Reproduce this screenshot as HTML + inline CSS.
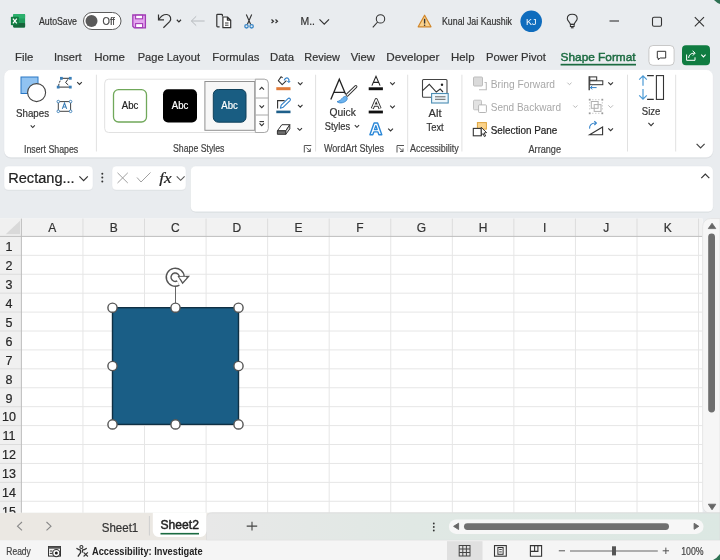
<!DOCTYPE html><html><head><meta charset="utf-8"><style>html,body{margin:0;padding:0;width:720px;height:560px;overflow:hidden;background:#e9ecef}svg{display:block}</style></head><body>
<svg width="720" height="560" viewBox="0 0 720 560" style="will-change:transform">
<rect x="0" y="0" width="720" height="560" fill="#e9ecef"/>
<rect x="13.2" y="14" width="11.9" height="13.5" rx="1" fill="#1f9d5c"/>
<rect x="13.2" y="14" width="11.9" height="4.6" rx="1" fill="#2bb06c"/>
<rect x="13.2" y="23" width="11.9" height="4.5" rx="1" fill="#17653b"/>
<rect x="10.9" y="16.8" width="7.9" height="8.4" rx="0.8" fill="#107c41"/>
<path d="M12.9 18.7 L16.8 23.3 M16.8 18.7 L12.9 23.3" stroke="#fff" stroke-width="1.3"/>
<text x="39" y="25" font-size="10.5" fill="#333" font-weight="400" text-anchor="start" textLength="38" lengthAdjust="spacingAndGlyphs" style='font-family:"Liberation Sans", sans-serif;' stroke="#333" stroke-width="0.2">AutoSave</text>
<rect x="83.5" y="12.5" width="37.5" height="17" rx="8.5" fill="#fff" stroke="#5c5c5c" stroke-width="1"/>
<circle cx="91.5" cy="21.1" r="6" fill="#5a5a5a"/>
<text x="102.5" y="25" font-size="10" fill="#444" font-weight="400" text-anchor="start" textLength="12.5" lengthAdjust="spacingAndGlyphs" style='font-family:"Liberation Sans", sans-serif;' stroke="#444" stroke-width="0.2">Off</text>
<path d="M132.8 15 H145.4 V27.8 H134.3 L132.8 26.3 Z" fill="#e5a6f0" stroke="#a23cb6" stroke-width="1.3"/>
<rect x="135.6" y="15.2" width="7" height="3.6" fill="#fff" stroke="#a23cb6" stroke-width="1.1"/>
<rect x="135.6" y="23.6" width="7" height="4" fill="#fff" stroke="#a23cb6" stroke-width="1.1"/>
<path d="M158.5 14.4 V19.9 H164" fill="none" stroke="#333" stroke-width="1.2"/>
<path d="M158.9 19.5 C161 15.8 164.3 14.3 167 14.5 C170.6 14.9 171.8 19 169.6 21.6 L163.4 27.7" fill="none" stroke="#333" stroke-width="1.2"/>
<path d="M176.8 19.750000000000004 L178.9 21.849999999999998 L181 19.750000000000004" fill="none" stroke="#333" stroke-width="1.2"/>
<path d="M191.4 21 H204.6 M191.4 21 L196.2 16.3 M191.4 21 L196.2 25.6" fill="none" stroke="#b6babe" stroke-width="1"/>
<path d="M219.6 26.8 H217.6 C217.1 26.8 216.8 26.5 216.8 26 V15.1 C216.8 14.6 217.1 14.3 217.6 14.3 H221.6 C222.1 14.3 222.4 14.6 222.4 15.1 V16.6" fill="none" stroke="#333" stroke-width="1.2"/>
<path d="M222.9 17 H227.4 L230.7 20.2 V27.7 H222.9 Z M227.4 17 V20.2 H230.7" fill="#fff" stroke="#333" stroke-width="1.2" stroke-linejoin="round"/>
<path d="M225 23 H228.5 M225 25.2 H228.5" stroke="#333" stroke-width="1"/>
<path d="M246.3 14.6 L250.7 24.4 M251.7 14.6 L247.3 24.4" stroke="#333" stroke-width="1.1"/>
<circle cx="246.5" cy="26.3" r="1.7" fill="none" stroke="#3b88c8" stroke-width="1.3"/>
<circle cx="251.6" cy="26.3" r="1.7" fill="none" stroke="#3b88c8" stroke-width="1.3"/>
<path d="M271.5 19.5 L273.5 21.3 L271.5 23 M275.5 19.5 L277.5 21.3 L275.5 23" fill="none" stroke="#333" stroke-width="1.2"/>
<text x="300.5" y="25.4" font-size="11" fill="#333" font-weight="400" text-anchor="start" textLength="14.5" lengthAdjust="spacingAndGlyphs" style='font-family:"Liberation Sans", sans-serif;' stroke="#333" stroke-width="0.2">M..</text>
<path d="M319.5 19.425 L324.25 24.175 L329 19.425" fill="none" stroke="#333" stroke-width="1.2"/>
<circle cx="380.5" cy="18.9" r="4.2" fill="none" stroke="#333" stroke-width="1.05"/>
<path d="M377.6 22 L372.8 27.4" stroke="#333" stroke-width="1.1"/>
<path d="M424.6 15.2 L431 26.8 H418.2 Z" fill="#f9d18c" stroke="#d0862a" stroke-width="1.2" stroke-linejoin="round"/>
<path d="M424.6 18.8 V23.6" stroke="#333" stroke-width="1.4"/>
<circle cx="424.6" cy="25.3" r="0.8" fill="#333"/>
<text x="442" y="25" font-size="10.5" fill="#333" font-weight="400" text-anchor="start" textLength="70" lengthAdjust="spacingAndGlyphs" style='font-family:"Liberation Sans", sans-serif;' stroke="#333" stroke-width="0.2">Kunal Jai Kaushik</text>
<circle cx="531.2" cy="21.3" r="10.8" fill="#0f6cbd"/>
<text x="531.2" y="24.6" font-size="9.5" fill="#fff" font-weight="400" text-anchor="middle" textLength="10.5" lengthAdjust="spacingAndGlyphs" style='font-family:"Liberation Sans", sans-serif;'  >KJ</text>
<path d="M570.4 24.4 C570 22.2 567.3 20.8 567.3 18.7 C567.3 16 569.5 14.3 572.25 14.3 C575 14.3 577.2 16 577.2 18.7 C577.2 20.8 574.5 22.2 574.1 24.4 Z" fill="none" stroke="#333" stroke-width="1.1" stroke-linejoin="round"/>
<rect x="570.4" y="24.4" width="3.7" height="2.1" fill="none" stroke="#333" stroke-width="1"/>
<path d="M570.9 27.7 H573.6" stroke="#555" stroke-width="1.4"/>
<path d="M609.5 21 H619" stroke="#333" stroke-width="1.1"/>
<rect x="652.5" y="17.3" width="9" height="9" rx="1.5" fill="none" stroke="#333" stroke-width="1.1"/>
<path d="M694.8 17.2 L704 26.4 M704 17.2 L694.8 26.4" stroke="#333" stroke-width="1.1"/>
<text x="15" y="60.8" font-size="11.5" fill="#333" font-weight="400" text-anchor="start" textLength="18.3" lengthAdjust="spacingAndGlyphs" style='font-family:"Liberation Sans", sans-serif;' stroke="#333" stroke-width="0.2">File</text>
<text x="54" y="60.8" font-size="11.5" fill="#333" font-weight="400" text-anchor="start" textLength="27.7" lengthAdjust="spacingAndGlyphs" style='font-family:"Liberation Sans", sans-serif;' stroke="#333" stroke-width="0.2">Insert</text>
<text x="94.3" y="60.8" font-size="11.5" fill="#333" font-weight="400" text-anchor="start" textLength="30.7" lengthAdjust="spacingAndGlyphs" style='font-family:"Liberation Sans", sans-serif;' stroke="#333" stroke-width="0.2">Home</text>
<text x="137.7" y="60.8" font-size="11.5" fill="#333" font-weight="400" text-anchor="start" textLength="62.3" lengthAdjust="spacingAndGlyphs" style='font-family:"Liberation Sans", sans-serif;' stroke="#333" stroke-width="0.2">Page Layout</text>
<text x="212.3" y="60.8" font-size="11.5" fill="#333" font-weight="400" text-anchor="start" textLength="47" lengthAdjust="spacingAndGlyphs" style='font-family:"Liberation Sans", sans-serif;' stroke="#333" stroke-width="0.2">Formulas</text>
<text x="270" y="60.8" font-size="11.5" fill="#333" font-weight="400" text-anchor="start" textLength="24" lengthAdjust="spacingAndGlyphs" style='font-family:"Liberation Sans", sans-serif;' stroke="#333" stroke-width="0.2">Data</text>
<text x="304.3" y="60.8" font-size="11.5" fill="#333" font-weight="400" text-anchor="start" textLength="35.7" lengthAdjust="spacingAndGlyphs" style='font-family:"Liberation Sans", sans-serif;' stroke="#333" stroke-width="0.2">Review</text>
<text x="350.7" y="60.8" font-size="11.5" fill="#333" font-weight="400" text-anchor="start" textLength="24.3" lengthAdjust="spacingAndGlyphs" style='font-family:"Liberation Sans", sans-serif;' stroke="#333" stroke-width="0.2">View</text>
<text x="386.2" y="60.8" font-size="11.5" fill="#333" font-weight="400" text-anchor="start" textLength="53.3" lengthAdjust="spacingAndGlyphs" style='font-family:"Liberation Sans", sans-serif;' stroke="#333" stroke-width="0.2">Developer</text>
<text x="451" y="60.8" font-size="11.5" fill="#333" font-weight="400" text-anchor="start" textLength="23.5" lengthAdjust="spacingAndGlyphs" style='font-family:"Liberation Sans", sans-serif;' stroke="#333" stroke-width="0.2">Help</text>
<text x="486" y="60.8" font-size="11.5" fill="#333" font-weight="400" text-anchor="start" textLength="60" lengthAdjust="spacingAndGlyphs" style='font-family:"Liberation Sans", sans-serif;' stroke="#333" stroke-width="0.2">Power Pivot</text>
<text x="560.6" y="60.8" font-size="11.8" fill="#1b6b40" font-weight="400" text-anchor="start" textLength="75" lengthAdjust="spacingAndGlyphs" style='font-family:"Liberation Sans", sans-serif;' stroke="#1b6b40" stroke-width="0.45">Shape Format</text>
<rect x="560.6" y="63.8" width="75.4" height="1.7" fill="#1b6b40"/>
<rect x="648.9" y="45.5" width="25.2" height="19.8" rx="4" fill="#fff" stroke="#c8c8c8" stroke-width="1"/>
<path d="M657.3 51.3 H665.7 V58 H660.2 L658.3 59.7 V58 H657.3 Z" fill="none" stroke="#333" stroke-width="1" stroke-linejoin="round"/>
<rect x="682" y="45.3" width="28" height="20" rx="4" fill="#107c41"/>
<path d="M686.6 54.5 V60.3 H695 V57.3" fill="none" stroke="#fff" stroke-width="1"/>
<path d="M688.6 58 C688.8 55 690.8 53.1 694.6 53.1" fill="none" stroke="#fff" stroke-width="1"/>
<path d="M692.6 50.8 L695.2 53.1 L692.8 55.6" fill="none" stroke="#fff" stroke-width="1"/>
<path d="M701.3 54.72499999999998 L703.45 56.875000000000014 L705.6 54.72499999999998" fill="none" stroke="#fff" stroke-width="1.1"/>
<rect x="4" y="70.3" width="709.2" height="88.3" rx="7" fill="#d9dcdf"/>
<rect x="4" y="69.5" width="709.2" height="88.1" rx="7" fill="#fff" stroke="#e2e5e8" stroke-width="0.5"/>
<rect x="21" y="77" width="17" height="16.5" fill="#91c3f1" stroke="#2b78c5" stroke-width="1"/>
<circle cx="36.6" cy="92.6" r="9" fill="#fff" stroke="#444" stroke-width="1.1"/>
<text x="16" y="117.2" font-size="11" fill="#333" font-weight="400" text-anchor="start" textLength="33" lengthAdjust="spacingAndGlyphs" style='font-family:"Liberation Sans", sans-serif;' stroke="#333" stroke-width="0.2">Shapes</text>
<path d="M30.7 125.475 L32.75 127.525 L34.8 125.475" fill="none" stroke="#333" stroke-width="1.1"/>
<path d="M61.4 78.3 H70.3 M58.2 87.1 H70.3" stroke="#333" stroke-width="1"/>
<path d="M58.6 85.8 C59 83 60 80.5 61.4 79" fill="none" stroke="#333" stroke-width="1" stroke-dasharray="2 1.3"/>
<path d="M67.9 79.3 L65.6 82.6 L68.3 85" fill="none" stroke="#333" stroke-width="1"/>
<rect x="60.0" y="76.89999999999999" width="2.8" height="2.8" fill="#3b7fb8"/>
<rect x="68.89999999999999" y="76.89999999999999" width="2.8" height="2.8" fill="#3b7fb8"/>
<rect x="56.800000000000004" y="85.69999999999999" width="2.8" height="2.8" fill="#3b7fb8"/>
<rect x="68.89999999999999" y="85.69999999999999" width="2.8" height="2.8" fill="#3b7fb8"/>
<path d="M77.2 82.15 L79.5 84.44999999999999 L81.8 82.15" fill="none" stroke="#333" stroke-width="1.1"/>
<rect x="58.3" y="101.6" width="12.3" height="9.7" fill="none" stroke="#444" stroke-width="1"/>
<circle cx="58.3" cy="101.6" r="1.3" fill="#fff" stroke="#3b7fb8" stroke-width="0.9"/>
<circle cx="70.6" cy="101.6" r="1.3" fill="#fff" stroke="#3b7fb8" stroke-width="0.9"/>
<circle cx="58.3" cy="111.3" r="1.3" fill="#fff" stroke="#3b7fb8" stroke-width="0.9"/>
<circle cx="70.6" cy="111.3" r="1.3" fill="#fff" stroke="#3b7fb8" stroke-width="0.9"/>
<path d="M62.3 108.9 L64.5 103 L66.7 108.9 M63 107 H66" fill="none" stroke="#3b7fb8" stroke-width="1.1"/>
<text x="24" y="152.7" font-size="10" fill="#444" font-weight="400" text-anchor="start" textLength="54.2" lengthAdjust="spacingAndGlyphs" style='font-family:"Liberation Sans", sans-serif;' stroke="#444" stroke-width="0.2">Insert Shapes</text>
<path d="M96.4 74.7 V151.5" stroke="#e1e1e1" stroke-width="1"/>
<rect x="104.7" y="79.2" width="163.6" height="53.3" rx="4" fill="#fff" stroke="#e1e1e1" stroke-width="1"/>
<rect x="113.5" y="89.7" width="33" height="32.3" rx="5" fill="#fff" stroke="#70a85a" stroke-width="1.3"/>
<text x="130" y="108.8" font-size="10" fill="#222" font-weight="400" text-anchor="middle" textLength="16.5" lengthAdjust="spacingAndGlyphs" style='font-family:"Liberation Sans", sans-serif;' stroke="#222" stroke-width="0.2">Abc</text>
<rect x="163" y="89.2" width="34" height="33.3" rx="5" fill="#000"/>
<text x="180" y="108.8" font-size="10" fill="#fff" font-weight="400" text-anchor="middle" textLength="16.5" lengthAdjust="spacingAndGlyphs" style='font-family:"Liberation Sans", sans-serif;' stroke="#fff" stroke-width="0.2">Abc</text>
<rect x="204.9" y="81.5" width="49.8" height="48.8" fill="#f7f7f7" stroke="#909090" stroke-width="1"/>
<rect x="213.3" y="89.5" width="32.7" height="32.7" rx="5" fill="#195d82" stroke="#10405a" stroke-width="1"/>
<text x="229.6" y="108.8" font-size="10" fill="#fff" font-weight="400" text-anchor="middle" textLength="16.5" lengthAdjust="spacingAndGlyphs" style='font-family:"Liberation Sans", sans-serif;' stroke="#fff" stroke-width="0.2">Abc</text>
<path d="M255.3 79.2 H264.3 A4 4 0 0 1 268.3 83.2 V128.5 A4 4 0 0 1 264.3 132.5 H255.3 Z" fill="#fff" stroke="#a8a8a8" stroke-width="1"/>
<path d="M255.3 98 H268.3 M255.3 115 H268.3" stroke="#a8a8a8" stroke-width="1"/>
<path d="M259.5 89.625 L261.75 87.375 L264 89.625" fill="none" stroke="#333" stroke-width="1.1"/>
<path d="M259.5 105.375 L261.75 107.625 L264 105.375" fill="none" stroke="#333" stroke-width="1.1"/>
<path d="M259.5 121.6 H264" stroke="#333" stroke-width="1.1"/>
<path d="M259.5 123.475 L261.75 125.725 L264 123.475" fill="none" stroke="#333" stroke-width="1.1"/>
<path d="M281.2 76.6 L278.3 80.7 L282.2 84.7 L286.4 80.6" fill="none" stroke="#333" stroke-width="1.1" stroke-linejoin="round"/>
<path d="M281.2 76.6 L282.6 77.8" fill="none" stroke="#333" stroke-width="1.1"/>
<path d="M284.2 80.4 C284.8 78.4 286.6 77.4 288 78.2 C289 78.8 289.2 80.2 288.8 82" fill="none" stroke="#2e7fc8" stroke-width="1.2"/>
<path d="M287.3 81 L288.8 82.6 L290.2 81" fill="none" stroke="#2e7fc8" stroke-width="1"/>
<rect x="276.3" y="87.2" width="14.2" height="3" fill="#e07b39"/>
<path d="M298 82.475 L300.25 84.725 L302.5 82.475" fill="none" stroke="#333" stroke-width="1.1"/>
<path d="M277.6 108.6 V100.6 H284.6" fill="none" stroke="#333" stroke-width="1.1"/>
<path d="M280.4 108.2 L281.2 105.2 L288 98.6 C288.6 98 289.5 98 290 98.6 C290.5 99.2 290.5 100 290 100.6 L283.3 107.2 Z" fill="#fff" stroke="#2e7fc8" stroke-width="1.1" stroke-linejoin="round"/>
<rect x="276.3" y="110.6" width="14.2" height="2.6" fill="#1e5f8a"/>
<path d="M298 104.875 L300.25 107.125 L302.5 104.875" fill="none" stroke="#333" stroke-width="1.1"/>
<path d="M277.4 130.8 L281.9 124.7 H289.8 L285.8 130.8 Z" fill="#fff" stroke="#333" stroke-width="1" stroke-linejoin="round"/>
<path d="M277.4 130.8 H285.8 V134.3 H277.4 Z" fill="#707070" stroke="#333" stroke-width="1" stroke-linejoin="round"/>
<path d="M285.8 130.8 L289.8 124.7 V128.9 L285.8 134.3 Z" fill="#d6d6d6" stroke="#333" stroke-width="1" stroke-linejoin="round"/>
<path d="M297.5 128.075 L299.75 130.325 L302 128.075" fill="none" stroke="#333" stroke-width="1.1"/>
<text x="173" y="152.3" font-size="10" fill="#444" font-weight="400" text-anchor="start" textLength="51.5" lengthAdjust="spacingAndGlyphs" style='font-family:"Liberation Sans", sans-serif;' stroke="#444" stroke-width="0.2">Shape Styles</text>
<path d="M304.3 152.5 V145.5 H311.3" fill="none" stroke="#555" stroke-width="1"/>
<path d="M306.3 147.5 L310.3 151.5 M310.3 148.5 V151.5 H307.3" fill="none" stroke="#555" stroke-width="1"/>
<path d="M315.6 74.7 V151.5" stroke="#e1e1e1" stroke-width="1"/>
<path d="M330.8 99.6 L339.3 79.3 L345.6 94.2 M334.3 92.4 H345" fill="none" stroke="#222" stroke-width="1.3"/>
<path d="M347.2 95 L355.8 86.6" fill="none" stroke="#333" stroke-width="3.2" stroke-linecap="round"/>
<path d="M347.2 95 L355.8 86.6" fill="none" stroke="#fff" stroke-width="1.3" stroke-linecap="round"/>
<path d="M337 101.6 C340 101.2 341.5 99 343 97.4 C344.6 95.8 346.8 96.4 347.2 98 C347.6 100.2 345 102.6 341 102.9 C339.5 103 338 102.6 337 101.6 Z" fill="#6db4ef" stroke="#2e7fc8" stroke-width="0.8"/>
<text x="329.6" y="115.8" font-size="11" fill="#333" font-weight="400" text-anchor="start" textLength="26.2" lengthAdjust="spacingAndGlyphs" style='font-family:"Liberation Sans", sans-serif;' stroke="#333" stroke-width="0.2">Quick</text>
<text x="324.8" y="130.3" font-size="11" fill="#333" font-weight="400" text-anchor="start" textLength="25.3" lengthAdjust="spacingAndGlyphs" style='font-family:"Liberation Sans", sans-serif;' stroke="#333" stroke-width="0.2">Styles</text>
<path d="M354.8 125.125 L356.95000000000005 127.275 L359.1 125.125" fill="none" stroke="#333" stroke-width="1.1"/>
<path d="M371.9 85.6 L376 76.4 L380.1 85.6 M373.3 82.4 H378.7" fill="none" stroke="#222" stroke-width="1.1"/>
<rect x="368.7" y="87.3" width="14.2" height="2.9" fill="#111"/>
<path d="M390.2 82.35 L392.5 84.65 L394.8 82.35" fill="none" stroke="#333" stroke-width="1.1"/>
<path d="M372.3 108.6 L376.2 99.6 L380.1 108.6 M373.9 105.2 H378.5" fill="none" stroke="#333" stroke-width="3.1" stroke-linejoin="round"/>
<path d="M372.3 108.6 L376.2 99.6 L380.1 108.6 M373.9 105.2 H378.5" fill="none" stroke="#fff" stroke-width="1.2" stroke-linejoin="round"/>
<rect x="368.7" y="110.6" width="14.2" height="2.8" fill="#111"/>
<path d="M390.2 105.64999999999999 L392.5 107.95 L394.8 105.64999999999999" fill="none" stroke="#333" stroke-width="1.1"/>
<path fill-rule="evenodd" d="M369.9 134.8 L374.1 123 H377.6 L381.8 134.8 H378.9 L377.9 131.9 H373.8 L372.8 134.8 Z M374.5 129.6 H377.2 L375.85 125.6 Z" fill="#fff" stroke="#2b88d8" stroke-width="1.4" stroke-linejoin="round"/>
<path d="M388.2 128.60000000000002 L390.6 131.0 L393 128.60000000000002" fill="none" stroke="#333" stroke-width="1.1"/>
<text x="324" y="152.1" font-size="10" fill="#444" font-weight="400" text-anchor="start" textLength="60" lengthAdjust="spacingAndGlyphs" style='font-family:"Liberation Sans", sans-serif;' stroke="#444" stroke-width="0.2">WordArt Styles</text>
<path d="M397 152.5 V145.5 H404" fill="none" stroke="#555" stroke-width="1"/>
<path d="M399 147.5 L403 151.5 M403 148.5 V151.5 H400" fill="none" stroke="#555" stroke-width="1"/>
<path d="M407.7 74.7 V151.5" stroke="#e1e1e1" stroke-width="1"/>
<path d="M431 97.3 H423.5 C422.9 97.3 422.5 96.9 422.5 96.3 V80.5 C422.5 79.9 422.9 79.5 423.5 79.5 H446 C446.6 79.5 447 79.9 447 80.5 V93" fill="none" stroke="#444" stroke-width="1.1"/>
<path d="M422.6 90.7 L429.3 84.4 L436.3 92 L440.2 89 L443 92" fill="none" stroke="#333" stroke-width="1.1"/>
<circle cx="442" cy="84.8" r="1.2" fill="#222"/>
<rect x="431.6" y="93.5" width="16.6" height="9.5" fill="#eef7fc" stroke="#4b8db3" stroke-width="1.1"/>
<path d="M435 96.8 H445.5 M435 99.3 H445.5" stroke="#555" stroke-width="0.9"/>
<text x="428.6" y="116.6" font-size="11" fill="#333" font-weight="400" text-anchor="start" textLength="13" lengthAdjust="spacingAndGlyphs" style='font-family:"Liberation Sans", sans-serif;' stroke="#333" stroke-width="0.2">Alt</text>
<text x="426.5" y="130.8" font-size="11" fill="#333" font-weight="400" text-anchor="start" textLength="17.2" lengthAdjust="spacingAndGlyphs" style='font-family:"Liberation Sans", sans-serif;' stroke="#333" stroke-width="0.2">Text</text>
<text x="410" y="152.1" font-size="10" fill="#444" font-weight="400" text-anchor="start" textLength="48.7" lengthAdjust="spacingAndGlyphs" style='font-family:"Liberation Sans", sans-serif;' stroke="#444" stroke-width="0.2">Accessibility</text>
<path d="M461.9 74.7 V151.5" stroke="#e1e1e1" stroke-width="1"/>
<rect x="473.5" y="77" width="9" height="9" rx="1" fill="#dadada" stroke="#bdbdbd" stroke-width="1"/>
<path d="M479 89.8 H486.3 V82.5 H484.5" fill="none" stroke="#bdbdbd" stroke-width="1.1"/>
<text x="490.7" y="87.7" font-size="11" fill="#a8a8a8" font-weight="400" text-anchor="start" textLength="64.3" lengthAdjust="spacingAndGlyphs" style='font-family:"Liberation Sans", sans-serif;'  >Bring Forward</text>
<path d="M567.4 82.675 L569.45 84.72500000000001 L571.5 82.675" fill="none" stroke="#b8b8b8" stroke-width="1.0"/>
<rect x="473.5" y="100.2" width="8" height="9.6" rx="1" fill="#e2e2e2" stroke="#c2c2c2" stroke-width="1"/>
<rect x="478.6" y="104.9" width="7.8" height="7.6" rx="0.8" fill="#fff" stroke="#b5b5b5" stroke-width="1"/>
<text x="490.7" y="110.6" font-size="11" fill="#a8a8a8" font-weight="400" text-anchor="start" textLength="70.3" lengthAdjust="spacingAndGlyphs" style='font-family:"Liberation Sans", sans-serif;'  >Send Backward</text>
<path d="M573.3 105.475 L575.3499999999999 107.525 L577.4 105.475" fill="none" stroke="#b8b8b8" stroke-width="1.0"/>
<rect x="477.4" y="122.6" width="9" height="6.5" fill="#fbd38a" stroke="#dea43c" stroke-width="1"/>
<rect x="473.3" y="128.4" width="8" height="7.4" fill="#fff" stroke="#333" stroke-width="1.1"/>
<path d="M481.2 127.3 L486.6 132.6 L484.2 132.9 L485.6 136 L484.4 136.6 L483 133.5 L481.4 135.2 Z" fill="#fff" stroke="#222" stroke-width="0.9" stroke-linejoin="round"/>
<text x="490.7" y="133.8" font-size="11" fill="#222" font-weight="400" text-anchor="start" textLength="66.6" lengthAdjust="spacingAndGlyphs" style='font-family:"Liberation Sans", sans-serif;' stroke="#222" stroke-width="0.2">Selection Pane</text>
<path d="M589.2 76.2 V90.3" stroke="#333" stroke-width="1.3"/>
<rect x="589.8" y="76.9" width="6.9" height="3.4" fill="#fff" stroke="#333" stroke-width="1"/>
<rect x="589.8" y="80.8" width="13" height="3.9" fill="#fff" stroke="#333" stroke-width="1"/>
<path d="M590.3 87.6 H596.6 M590.3 87.6 L592.3 85.9 M590.3 87.6 L592.3 89.3" fill="none" stroke="#2e7fc8" stroke-width="1"/>
<path d="M608.3 82.32499999999999 L610.65 84.67500000000001 L613 82.32499999999999" fill="none" stroke="#333" stroke-width="1.1"/>
<rect x="588.8000000000001" y="98.8" width="1.8" height="1.8" fill="#9a9a9a"/>
<rect x="601.4" y="98.8" width="1.8" height="1.8" fill="#9a9a9a"/>
<rect x="588.8000000000001" y="112.39999999999999" width="1.8" height="1.8" fill="#9a9a9a"/>
<rect x="601.4" y="112.39999999999999" width="1.8" height="1.8" fill="#9a9a9a"/>
<path d="M592 99.7 H600 M592 113.3 H600 M589.7 102 V111 M602.3 102 V111" stroke="#c8c8c8" stroke-width="0.9" stroke-dasharray="1.5 1.5"/>
<rect x="591.3" y="101.5" width="6.8" height="6.8" fill="none" stroke="#b0b0b0" stroke-width="1"/>
<rect x="594.2" y="104.6" width="6.8" height="6.8" fill="none" stroke="#b0b0b0" stroke-width="1"/>
<path d="M608.3 105.32499999999999 L610.65 107.67500000000001 L613 105.32499999999999" fill="none" stroke="#b8b8b8" stroke-width="1.0"/>
<path d="M589.6 134.8 L602.6 127 V134.8 Z" fill="none" stroke="#333" stroke-width="1.1" stroke-linejoin="miter"/>
<path d="M589.6 128.6 C589.3 125 591.8 122.8 595.8 123" fill="none" stroke="#2e7fc8" stroke-width="1.1"/>
<path d="M594.3 121.1 L596.4 123 L594.4 125" fill="none" stroke="#2e7fc8" stroke-width="1.1"/>
<path d="M608.3 128.325 L610.65 130.675 L613 128.325" fill="none" stroke="#333" stroke-width="1.1"/>
<text x="528.5" y="152.6" font-size="10" fill="#444" font-weight="400" text-anchor="start" textLength="32.5" lengthAdjust="spacingAndGlyphs" style='font-family:"Liberation Sans", sans-serif;' stroke="#444" stroke-width="0.2">Arrange</text>
<path d="M627.5 74.7 V151.5" stroke="#e1e1e1" stroke-width="1"/>
<path d="M643 76 V85.7 M643 89.1 V99 M639.2 79.6 L643 75.8 L646.8 79.6 M639.2 95.4 L643 99.2 L646.8 95.4" fill="none" stroke="#4b9ad5" stroke-width="1.2"/>
<path d="M647.1 75.6 H653.8 M647.1 99.4 H653.8" stroke="#333" stroke-width="1.1"/>
<rect x="656.4" y="75.6" width="7.1" height="23.8" fill="#fff" stroke="#333" stroke-width="1.1"/>
<text x="641.8" y="114.9" font-size="11" fill="#333" font-weight="400" text-anchor="start" textLength="18.6" lengthAdjust="spacingAndGlyphs" style='font-family:"Liberation Sans", sans-serif;' stroke="#333" stroke-width="0.2">Size</text>
<path d="M648.4 122.97499999999998 L651.05 125.62500000000001 L653.7 122.97499999999998" fill="none" stroke="#333" stroke-width="1.1"/>
<path d="M675.7 74.7 V151.5" stroke="#e1e1e1" stroke-width="1"/>
<path d="M696.6 143.8 L700.6 147.8 L704.6 143.8" fill="none" stroke="#444" stroke-width="1.2"/>
<rect x="4" y="166.6" width="89" height="24" rx="4" fill="#d6d9dc"/>
<rect x="4" y="166" width="89" height="24" rx="4" fill="#fff" stroke="#e3e6e9" stroke-width="0.5"/>
<text x="8.2" y="183" font-size="14" fill="#222" font-weight="400" text-anchor="start" textLength="66.5" lengthAdjust="spacingAndGlyphs" style='font-family:"Liberation Sans", sans-serif;' stroke="#222" stroke-width="0.2">Rectang...</text>
<path d="M79.4 176.4 L83.6 180.6 L87.8 176.4" fill="none" stroke="#333" stroke-width="1.2"/>
<circle cx="102.3" cy="173.8" r="1" fill="#333"/>
<circle cx="102.3" cy="177.6" r="1" fill="#333"/>
<circle cx="102.3" cy="181.5" r="1" fill="#333"/>
<rect x="112" y="166.6" width="74" height="24" rx="4" fill="#d6d9dc"/>
<rect x="112" y="166" width="74" height="24" rx="4" fill="#fff" stroke="#e3e6e9" stroke-width="0.5"/>
<path d="M117.5 172.8 L127.8 183 M127.8 172.8 L117.5 183" stroke="#a0a0a0" stroke-width="1"/>
<path d="M137 177.5 L141 182 L150.5 172.5" fill="none" stroke="#a0a0a0" stroke-width="1"/>
<text x="159.3" y="182.6" font-size="15" fill="#222" font-weight="400" text-anchor="start" textLength="12.5" lengthAdjust="spacingAndGlyphs" style='font-family:"Liberation Serif", serif;font-style:italic' stroke="#222" stroke-width="0.2">fx</text>
<path d="M176.7 176.32500000000002 L180.64999999999998 180.275 L184.6 176.32500000000002" fill="none" stroke="#555" stroke-width="1.1"/>
<rect x="190.5" y="166.6" width="522.7" height="45.8" rx="5" fill="#d6d9dc"/>
<rect x="190.5" y="166" width="522.7" height="45.8" rx="5" fill="#fff" stroke="#e3e6e9" stroke-width="0.5"/>
<path d="M701.3 178.2 L705.3 174.2 L709.3 178.2" fill="none" stroke="#333" stroke-width="1.2"/>
<rect x="0" y="218.6" width="702.6" height="294.19999999999993" fill="#fff"/>
<rect x="0" y="218.6" width="702.6" height="17.80000000000001" fill="#f2f2f2"/>
<rect x="0" y="218.6" width="21.4" height="294.19999999999993" fill="#f0f0f0"/>
<path d="M5.7 234.3 L20 220.7 V234.3 Z" fill="#d9d9d9"/>
<path d="M82.96 218.6 V236.4" stroke="#dcdcdc" stroke-width="1"/>
<path d="M82.96 236.4 V512.8" stroke="#e6e6e6" stroke-width="1"/>
<path d="M144.52 218.6 V236.4" stroke="#dcdcdc" stroke-width="1"/>
<path d="M144.52 236.4 V512.8" stroke="#e6e6e6" stroke-width="1"/>
<path d="M206.08 218.6 V236.4" stroke="#dcdcdc" stroke-width="1"/>
<path d="M206.08 236.4 V512.8" stroke="#e6e6e6" stroke-width="1"/>
<path d="M267.64 218.6 V236.4" stroke="#dcdcdc" stroke-width="1"/>
<path d="M267.64 236.4 V512.8" stroke="#e6e6e6" stroke-width="1"/>
<path d="M329.20 218.6 V236.4" stroke="#dcdcdc" stroke-width="1"/>
<path d="M329.20 236.4 V512.8" stroke="#e6e6e6" stroke-width="1"/>
<path d="M390.76 218.6 V236.4" stroke="#dcdcdc" stroke-width="1"/>
<path d="M390.76 236.4 V512.8" stroke="#e6e6e6" stroke-width="1"/>
<path d="M452.32 218.6 V236.4" stroke="#dcdcdc" stroke-width="1"/>
<path d="M452.32 236.4 V512.8" stroke="#e6e6e6" stroke-width="1"/>
<path d="M513.88 218.6 V236.4" stroke="#dcdcdc" stroke-width="1"/>
<path d="M513.88 236.4 V512.8" stroke="#e6e6e6" stroke-width="1"/>
<path d="M575.44 218.6 V236.4" stroke="#dcdcdc" stroke-width="1"/>
<path d="M575.44 236.4 V512.8" stroke="#e6e6e6" stroke-width="1"/>
<path d="M637.00 218.6 V236.4" stroke="#dcdcdc" stroke-width="1"/>
<path d="M637.00 236.4 V512.8" stroke="#e6e6e6" stroke-width="1"/>
<path d="M698.56 218.6 V236.4" stroke="#dcdcdc" stroke-width="1"/>
<path d="M698.56 236.4 V512.8" stroke="#e6e6e6" stroke-width="1"/>
<path d="M0 255.32 H21.4" stroke="#dcdcdc" stroke-width="1"/>
<path d="M21.4 255.32 H702.6" stroke="#e6e6e6" stroke-width="1"/>
<path d="M0 274.24 H21.4" stroke="#dcdcdc" stroke-width="1"/>
<path d="M21.4 274.24 H702.6" stroke="#e6e6e6" stroke-width="1"/>
<path d="M0 293.16 H21.4" stroke="#dcdcdc" stroke-width="1"/>
<path d="M21.4 293.16 H702.6" stroke="#e6e6e6" stroke-width="1"/>
<path d="M0 312.08 H21.4" stroke="#dcdcdc" stroke-width="1"/>
<path d="M21.4 312.08 H702.6" stroke="#e6e6e6" stroke-width="1"/>
<path d="M0 331.00 H21.4" stroke="#dcdcdc" stroke-width="1"/>
<path d="M21.4 331.00 H702.6" stroke="#e6e6e6" stroke-width="1"/>
<path d="M0 349.92 H21.4" stroke="#dcdcdc" stroke-width="1"/>
<path d="M21.4 349.92 H702.6" stroke="#e6e6e6" stroke-width="1"/>
<path d="M0 368.84 H21.4" stroke="#dcdcdc" stroke-width="1"/>
<path d="M21.4 368.84 H702.6" stroke="#e6e6e6" stroke-width="1"/>
<path d="M0 387.76 H21.4" stroke="#dcdcdc" stroke-width="1"/>
<path d="M21.4 387.76 H702.6" stroke="#e6e6e6" stroke-width="1"/>
<path d="M0 406.68 H21.4" stroke="#dcdcdc" stroke-width="1"/>
<path d="M21.4 406.68 H702.6" stroke="#e6e6e6" stroke-width="1"/>
<path d="M0 425.60 H21.4" stroke="#dcdcdc" stroke-width="1"/>
<path d="M21.4 425.60 H702.6" stroke="#e6e6e6" stroke-width="1"/>
<path d="M0 444.52 H21.4" stroke="#dcdcdc" stroke-width="1"/>
<path d="M21.4 444.52 H702.6" stroke="#e6e6e6" stroke-width="1"/>
<path d="M0 463.44 H21.4" stroke="#dcdcdc" stroke-width="1"/>
<path d="M21.4 463.44 H702.6" stroke="#e6e6e6" stroke-width="1"/>
<path d="M0 482.36 H21.4" stroke="#dcdcdc" stroke-width="1"/>
<path d="M21.4 482.36 H702.6" stroke="#e6e6e6" stroke-width="1"/>
<path d="M0 501.28 H21.4" stroke="#dcdcdc" stroke-width="1"/>
<path d="M21.4 501.28 H702.6" stroke="#e6e6e6" stroke-width="1"/>
<path d="M21.4 218.6 V512.8" stroke="#bdbdbd" stroke-width="1"/>
<path d="M0 236.4 H702.6" stroke="#bdbdbd" stroke-width="1"/>
<text x="52.18" y="232.1" font-size="12" fill="#333" font-weight="400" text-anchor="middle" style='font-family:"Liberation Sans", sans-serif;' stroke="#333" stroke-width="0.2">A</text>
<text x="113.74" y="232.1" font-size="12" fill="#333" font-weight="400" text-anchor="middle" style='font-family:"Liberation Sans", sans-serif;' stroke="#333" stroke-width="0.2">B</text>
<text x="175.3" y="232.1" font-size="12" fill="#333" font-weight="400" text-anchor="middle" style='font-family:"Liberation Sans", sans-serif;' stroke="#333" stroke-width="0.2">C</text>
<text x="236.86" y="232.1" font-size="12" fill="#333" font-weight="400" text-anchor="middle" style='font-family:"Liberation Sans", sans-serif;' stroke="#333" stroke-width="0.2">D</text>
<text x="298.42" y="232.1" font-size="12" fill="#333" font-weight="400" text-anchor="middle" style='font-family:"Liberation Sans", sans-serif;' stroke="#333" stroke-width="0.2">E</text>
<text x="359.98" y="232.1" font-size="12" fill="#333" font-weight="400" text-anchor="middle" style='font-family:"Liberation Sans", sans-serif;' stroke="#333" stroke-width="0.2">F</text>
<text x="421.54" y="232.1" font-size="12" fill="#333" font-weight="400" text-anchor="middle" style='font-family:"Liberation Sans", sans-serif;' stroke="#333" stroke-width="0.2">G</text>
<text x="483.1" y="232.1" font-size="12" fill="#333" font-weight="400" text-anchor="middle" style='font-family:"Liberation Sans", sans-serif;' stroke="#333" stroke-width="0.2">H</text>
<text x="544.66" y="232.1" font-size="12" fill="#333" font-weight="400" text-anchor="middle" style='font-family:"Liberation Sans", sans-serif;' stroke="#333" stroke-width="0.2">I</text>
<text x="606.22" y="232.1" font-size="12" fill="#333" font-weight="400" text-anchor="middle" style='font-family:"Liberation Sans", sans-serif;' stroke="#333" stroke-width="0.2">J</text>
<text x="667.78" y="232.1" font-size="12" fill="#333" font-weight="400" text-anchor="middle" style='font-family:"Liberation Sans", sans-serif;' stroke="#333" stroke-width="0.2">K</text>
<text x="9.0" y="251.2" font-size="12.5" fill="#262626" font-weight="400" text-anchor="middle" style='font-family:"Liberation Sans", sans-serif;' stroke="#262626" stroke-width="0.2">1</text>
<text x="9.0" y="270.12" font-size="12.5" fill="#262626" font-weight="400" text-anchor="middle" style='font-family:"Liberation Sans", sans-serif;' stroke="#262626" stroke-width="0.2">2</text>
<text x="9.0" y="289.04" font-size="12.5" fill="#262626" font-weight="400" text-anchor="middle" style='font-family:"Liberation Sans", sans-serif;' stroke="#262626" stroke-width="0.2">3</text>
<text x="9.0" y="307.96" font-size="12.5" fill="#262626" font-weight="400" text-anchor="middle" style='font-family:"Liberation Sans", sans-serif;' stroke="#262626" stroke-width="0.2">4</text>
<text x="9.0" y="326.88" font-size="12.5" fill="#262626" font-weight="400" text-anchor="middle" style='font-family:"Liberation Sans", sans-serif;' stroke="#262626" stroke-width="0.2">5</text>
<text x="9.0" y="345.8" font-size="12.5" fill="#262626" font-weight="400" text-anchor="middle" style='font-family:"Liberation Sans", sans-serif;' stroke="#262626" stroke-width="0.2">6</text>
<text x="9.0" y="364.72" font-size="12.5" fill="#262626" font-weight="400" text-anchor="middle" style='font-family:"Liberation Sans", sans-serif;' stroke="#262626" stroke-width="0.2">7</text>
<text x="9.0" y="383.64" font-size="12.5" fill="#262626" font-weight="400" text-anchor="middle" style='font-family:"Liberation Sans", sans-serif;' stroke="#262626" stroke-width="0.2">8</text>
<text x="9.0" y="402.56" font-size="12.5" fill="#262626" font-weight="400" text-anchor="middle" style='font-family:"Liberation Sans", sans-serif;' stroke="#262626" stroke-width="0.2">9</text>
<text x="9.0" y="421.48" font-size="12.5" fill="#262626" font-weight="400" text-anchor="middle" style='font-family:"Liberation Sans", sans-serif;' stroke="#262626" stroke-width="0.2">10</text>
<text x="9.0" y="440.4" font-size="12.5" fill="#262626" font-weight="400" text-anchor="middle" style='font-family:"Liberation Sans", sans-serif;' stroke="#262626" stroke-width="0.2">11</text>
<text x="9.0" y="459.32" font-size="12.5" fill="#262626" font-weight="400" text-anchor="middle" style='font-family:"Liberation Sans", sans-serif;' stroke="#262626" stroke-width="0.2">12</text>
<text x="9.0" y="478.24" font-size="12.5" fill="#262626" font-weight="400" text-anchor="middle" style='font-family:"Liberation Sans", sans-serif;' stroke="#262626" stroke-width="0.2">13</text>
<text x="9.0" y="497.16" font-size="12.5" fill="#262626" font-weight="400" text-anchor="middle" style='font-family:"Liberation Sans", sans-serif;' stroke="#262626" stroke-width="0.2">14</text>
<text x="9.0" y="516.08" font-size="12.5" fill="#262626" font-weight="400" text-anchor="middle" style='font-family:"Liberation Sans", sans-serif;' stroke="#262626" stroke-width="0.2">15</text>
<path d="M702.6 226.5 A8 8 0 0 1 710.6 218.5 H720 V513.4 H710.6 A8 8 0 0 1 702.6 505.4 Z" fill="#f6f6f6" stroke="#e2e2e2" stroke-width="0.8"/>
<path d="M708.3 228.6 L712.05 223.2 L715.8 228.6 Z" fill="#666" stroke="#666" stroke-width="0.8" stroke-linejoin="round"/>
<rect x="708.2" y="233.5" width="6.8" height="179" rx="3.4" fill="#6e6e6e"/>
<path d="M708.3 504.2 L715.8 504.2 L712.05 509.8 Z" fill="#666" stroke="#666" stroke-width="0.8" stroke-linejoin="round"/>
<rect x="112.5" y="307.7" width="126" height="116.7" fill="#1a5e86" stroke="#0f3044" stroke-width="1.4"/>
<path d="M175.5 286 V303" stroke="#666" stroke-width="1"/>
<path d="M178.30 283.03 A6.6 6.6 0 1 1 181.80 277.19" fill="none" stroke="#555" stroke-width="6.2"/>
<path d="M178.30 283.03 A6.6 6.6 0 1 1 181.80 277.19" fill="none" stroke="#fff" stroke-width="3.4"/>
<path d="M178.6 276.6 L188.6 276.4 L182.6 283.2 Z" fill="#fff" stroke="#555" stroke-width="1.3" stroke-linejoin="miter"/>
<path d="M179.6 277.6 H186" stroke="#fff" stroke-width="1.6"/>
<circle cx="112.5" cy="307.7" r="4.6" fill="#fff" stroke="#555" stroke-width="1.4"/>
<circle cx="112.5" cy="366" r="4.6" fill="#fff" stroke="#555" stroke-width="1.4"/>
<circle cx="112.5" cy="424.4" r="4.6" fill="#fff" stroke="#555" stroke-width="1.4"/>
<circle cx="175.5" cy="307.7" r="4.6" fill="#fff" stroke="#555" stroke-width="1.4"/>
<circle cx="175.5" cy="424.4" r="4.6" fill="#fff" stroke="#555" stroke-width="1.4"/>
<circle cx="238.5" cy="307.7" r="4.6" fill="#fff" stroke="#555" stroke-width="1.4"/>
<circle cx="238.5" cy="366" r="4.6" fill="#fff" stroke="#555" stroke-width="1.4"/>
<circle cx="238.5" cy="424.4" r="4.6" fill="#fff" stroke="#555" stroke-width="1.4"/>
<rect x="0" y="512.8" width="720" height="27.6" fill="#ebe8e3"/>
<defs><linearGradient id="tg" x1="0" x2="1" y1="0" y2="0"><stop offset="0" stop-color="#e8e8e8"/><stop offset="0.4" stop-color="#e0e8e4"/><stop offset="1" stop-color="#dce8e3"/></linearGradient></defs>
<path d="M206.5 540.4 V517.8 A5 5 0 0 1 211.5 512.8 H720 V540.4 Z" fill="url(#tg)" stroke="#dadada" stroke-width="0.7"/>
<path d="M22 522 L17.5 526.2 L22 530.3" fill="none" stroke="#888" stroke-width="1.1"/>
<path d="M46.5 522 L51 526.2 L46.5 530.3" fill="none" stroke="#888" stroke-width="1.1"/>
<text x="101.7" y="532.2" font-size="12" fill="#333" font-weight="400" text-anchor="start" textLength="36.6" lengthAdjust="spacingAndGlyphs" style='font-family:"Liberation Sans", sans-serif;' stroke="#333" stroke-width="0.2">Sheet1</text>
<path d="M149.4 516 V535.5" stroke="#cfcfcf" stroke-width="1"/>
<path d="M152.8 512.8 H206.4 V531 A6 6 0 0 1 200.4 537 H158.8 A6 6 0 0 1 152.8 531 Z" fill="#fff"/>
<text x="160.5" y="528.6" font-size="12.3" fill="#222" font-weight="400" text-anchor="start" textLength="38.4" lengthAdjust="spacingAndGlyphs" style='font-family:"Liberation Sans", sans-serif;' stroke="#222" stroke-width="0.45">Sheet2</text>
<rect x="160.5" y="532.9" width="38.5" height="1.6" fill="#1b6b40"/>
<path d="M252 521.7 V530.5 M246.7 526.1 H257.2" stroke="#444" stroke-width="1.1"/>
<circle cx="433.8" cy="523.5" r="0.9" fill="#333"/>
<circle cx="433.8" cy="527" r="0.9" fill="#333"/>
<circle cx="433.8" cy="530.5" r="0.9" fill="#333"/>
<rect x="448.9" y="519.4" width="254.6" height="14.5" rx="7.25" fill="#f7f7f7"/>
<path d="M458.6 523.2 V529.5 L453.6 526.35 Z" fill="#666" stroke="#666" stroke-width="0.9" stroke-linejoin="round"/>
<rect x="464" y="523.2" width="205" height="6.7" rx="3.35" fill="#707070"/>
<path d="M694.1 523.3 V529.3 L698.8 526.3 Z" fill="#666" stroke="#666" stroke-width="0.9" stroke-linejoin="round"/>
<rect x="0" y="540.4" width="720" height="19.6" fill="#f5f5f5"/>
<text x="6.3" y="555.3" font-size="10" fill="#444" font-weight="400" text-anchor="start" textLength="24.5" lengthAdjust="spacingAndGlyphs" style='font-family:"Liberation Sans", sans-serif;' stroke="#444" stroke-width="0.2">Ready</text>
<rect x="48.5" y="546.5" width="12" height="9.6" fill="none" stroke="#333" stroke-width="1"/>
<rect x="48.5" y="546.5" width="12" height="2.2" fill="#555"/>
<path d="M49.8 551 H52.4 M49.8 553.4 H52.4" stroke="#333" stroke-width="1"/>
<circle cx="56.3" cy="553.1" r="3.6" fill="#fff" stroke="#333" stroke-width="1.1"/>
<circle cx="56.3" cy="553.1" r="1.5" fill="#222"/>
<circle cx="81.4" cy="547" r="1.5" fill="none" stroke="#333" stroke-width="1.1"/>
<path d="M76.9 548.4 C78.5 549.6 79.5 549.9 80.3 549.9 L80.6 552.6 L78.2 556.2 M86.3 548.4 C84.7 549.6 83.5 549.9 82.6 549.9 L82.4 552" fill="none" stroke="#333" stroke-width="1.3" stroke-linecap="round" stroke-linejoin="round"/>
<path d="M83.6 552.3 L87.9 556.5 M87.9 552.3 L83.6 556.5" stroke="#333" stroke-width="1.1"/>
<text x="92" y="555.1" font-size="10" fill="#222" font-weight="700" text-anchor="start" textLength="110.6" lengthAdjust="spacingAndGlyphs" style='font-family:"Liberation Sans", sans-serif;' >Accessibility: Investigate</text>
<rect x="447" y="541.2" width="35.5" height="18.8" fill="#e0e0e0"/>
<rect x="459.2" y="545.5" width="10.8" height="10.5" fill="none" stroke="#444" stroke-width="1"/>
<path d="M462.8 545.5 V556 M466.4 545.5 V556 M459.2 549 H470 M459.2 552.5 H470" stroke="#444" stroke-width="1"/>
<rect x="494.5" y="545.6" width="11.8" height="10.6" fill="none" stroke="#333" stroke-width="1.1"/>
<rect x="497.9" y="547.5" width="5.2" height="6.8" fill="none" stroke="#333" stroke-width="1"/>
<path d="M499.2 549.5 H501.8 M499.2 551.9 H501.8" stroke="#333" stroke-width="0.9"/>
<path d="M530.4 545.6 V556.2 H541.6 V545.6 Z M530.4 551.4 H537.9 V545.6 M534.6 545.6 V551.4" fill="none" stroke="#333" stroke-width="1.1"/>
<path d="M558.8 550.8 H565" stroke="#555" stroke-width="1"/>
<path d="M570 551 H657.8" stroke="#666" stroke-width="1.2"/>
<rect x="612" y="546.3" width="4" height="9.1" fill="#555"/>
<path d="M662.7 550.8 H669 M665.85 547.6 V554" stroke="#555" stroke-width="1"/>
<text x="681.2" y="554.9" font-size="10" fill="#444" font-weight="400" text-anchor="start" textLength="22.3" lengthAdjust="spacingAndGlyphs" style='font-family:"Liberation Sans", sans-serif;' stroke="#444" stroke-width="0.2">100%</text>
<path d="M714 0 Q717 3 720 4 V0 Z" fill="#0c5a36" opacity="0.85"/>
<path d="M720 554 Q717 558 713 560 H720 Z" fill="#0c5a36" opacity="0.85"/>
</svg></body></html>
